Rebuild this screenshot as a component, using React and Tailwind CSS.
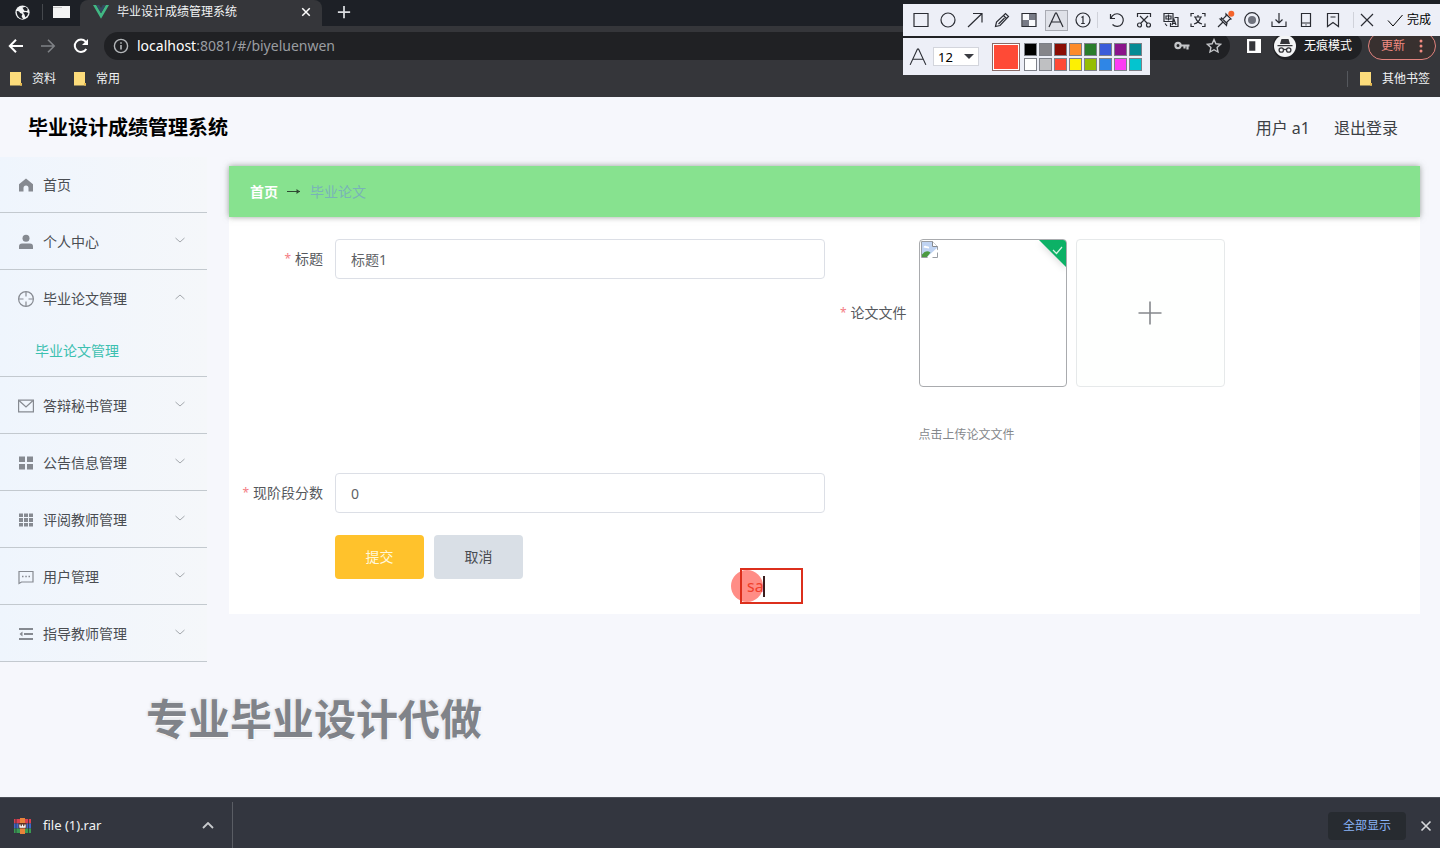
import { useState } from "react";

const FONT = "font-['Noto_Sans','Noto_Sans_CJK_SC',sans-serif]";

function Svg({ size = 16, className = "", children, ...rest }) {
  return (
    <svg
      width={size}
      height={size}
      viewBox="0 0 16 16"
      fill="none"
      stroke="currentColor"
      strokeWidth="1.2"
      aria-hidden="true"
      className={`shrink-0 ${className}`}
      {...rest}
    >
      {children}
    </svg>
  );
}

function Folder() {
  return (
    <svg width="12" height="14" viewBox="0 0 12 14" aria-hidden="true" className="shrink-0">
      <path d="M0 0h11v11h1v2.5H0z" fill="#fcdc7b" />
      <path d="M10 11h2v2.5h-2z" fill="#e8bb50" />
    </svg>
  );
}

function TabStrip() {
  return (
    <div className="flex h-[26px] items-start bg-[#1d2026]">
      <div className="flex h-6 w-20 items-center">
        <button type="button" aria-label="地球标签" className="flex w-[42px] justify-center pl-[2px] text-[#f1f3f4]">
          <Svg size={15} stroke="none">
            <circle cx="8" cy="8" r="7.6" fill="#f1f3f4" />
            <path d="M1.800 6.500Q4.500 6 5.500 8.500l2.500 1L7 12l1.500 2.800C4.500 15 1.800 11.500 1.800 6.500zM8 3l3-1.200L13.500 4 13 6.500 10 6z" fill="#1d2026" />
            <path d="M8.500 8l3-.5 2.800 1-1.300 3-2 1.500-.8-2.500z" fill="#1d2026" />
          </Svg>
        </button>
        <button type="button" aria-label="空白标签" className="flex h-4 w-[38px] items-center justify-center border-l border-[#45484d]">
          <svg width="17" height="12" viewBox="0 0 17 12" aria-hidden="true">
            <path d="M0 0h17v12H0z" fill="#f4f4f4" />
            <path d="M0 1.500h9" stroke="#c9c9c9" />
          </svg>
        </button>
      </div>
      <div className="flex h-[26px] w-[242px] items-start rounded-t-lg bg-[#35363a]">
        <div className="flex h-6 flex-1 items-center pl-[13px] pr-[11px]">
          <svg width="16" height="14" viewBox="0 0 16 14" aria-hidden="true">
            <path d="M0 0h3.200L8 8.300 12.800 0H16L8 13.800z" fill="#41b883" />
            <path d="M3.200 0h3L8 3.100 9.800 0h3L8 8.300z" fill="#34495e" />
          </svg>
          <span className="ml-2 text-xs text-[#f1f3f4]">毕业设计成绩管理系统</span>
          <button type="button" aria-label="关闭标签" className="ml-auto text-white">
            <Svg size={10}><path d="M2 2l12 12M14 2L2 14" strokeWidth="2.400" /></Svg>
          </button>
        </div>
      </div>
      <button type="button" aria-label="新标签页" className="flex h-6 w-11 items-center justify-center text-[#dadce0]">
        <Svg size={14}><path d="M8 1v14M1 8h14" strokeWidth="2" /></Svg>
      </button>
    </div>
  );
}

function AddressRow() {
  return (
    <div className="flex h-10 items-center pr-1 text-[#e8eaed]">
      <button type="button" aria-label="后退" className="flex w-8 justify-center text-white">
        <Svg><path d="M15 8H2M8 1.800L1.800 8 8 14.200" strokeWidth="2" /></Svg>
      </button>
      <button type="button" aria-label="前进" className="flex w-8 justify-center text-[#7f8286]">
        <Svg><path d="M1 8h13M8 1.800L14.200 8 8 14.200" strokeWidth="1.600" /></Svg>
      </button>
      <button type="button" aria-label="重新加载" className="flex w-[34px] justify-center text-white">
        <Svg>
          <path d="M13.300 11A6.200 6.200 0 1 1 12.600 3.600L14 5" strokeWidth="2" />
          <path d="M15 1v6H9z" fill="currentColor" stroke="none" />
        </Svg>
      </button>
      <div className="ml-1.5 flex h-7 flex-1 items-center rounded-full bg-[#202124] pl-[9px] pr-2">
        <Svg className="text-[#b4b7ba]">
          <circle cx="8" cy="8" r="6.600" strokeWidth="1.400" />
          <path d="M8 7v4.500M8 4.300v1.500" strokeWidth="1.600" />
        </Svg>
        <span className="ml-2 text-sm text-[#9a9da1]">
          <span className="text-white">localhost</span>:8081/#/biyeluenwen
        </span>
        <span className="ml-auto flex items-center gap-4">
          <Svg className="text-[#c4c6c9]">
            <circle cx="4" cy="7.500" r="2.600" strokeWidth="2.200" />
            <path d="M6.500 7.500H15.500M13.500 7.500v4M10.500 7.500v3" strokeWidth="2.200" />
          </Svg>
          <Svg className="text-[#c4c6c9]"><path d="M8 1.600l1.900 4.200 4.600.5-3.400 3.100.9 4.600L8 11.700 4 14l.9-4.600L1.500 6.300l4.600-.5z" strokeWidth="1.400" /></Svg>
        </span>
      </div>
      <button type="button" aria-label="侧边栏" className="ml-4 flex w-[15px] justify-center text-white">
        <Svg size={14}><path d="M0 0h16v16H0zM2.500 2.500v11h7v-11z" fill="currentColor" fillRule="evenodd" stroke="none" /></Svg>
      </button>
      <div className="ml-3 flex h-7 w-[89px] items-center rounded-full bg-[#202124] pl-px">
        <svg width="22" height="22" viewBox="0 0 22 22" aria-hidden="true" className="shrink-0">
          <circle cx="11" cy="11" r="11" fill="#f4f5f6" />
          <path d="M7.500 4h7l1.500 5H6zM3.500 10h15v1.300h-15z" fill="#35363a" />
          <g fill="none" stroke="#35363a" strokeWidth="1.300">
            <circle cx="7.300" cy="15" r="2.200" />
            <circle cx="14.700" cy="15" r="2.200" />
            <path d="M9.500 14.500h3" />
          </g>
        </svg>
        <span className="ml-2 whitespace-nowrap text-xs text-white">无痕模式</span>
      </div>
      <button type="button" className="ml-1.5 flex h-7 w-[68px] items-center rounded-full border border-[#e2837e] bg-[#38302f] pl-3 text-xs text-[#f28b82]">
        更新
        <svg width="4" height="14" viewBox="0 0 4 14" fill="#f28b82" aria-hidden="true" className="ml-3.5">
          <circle cx="2" cy="2" r="1.500" /><circle cx="2" cy="7" r="1.500" /><circle cx="2" cy="12" r="1.500" />
        </svg>
      </button>
    </div>
  );
}

function BookmarkBar() {
  return (
    <div className="flex h-[31px] items-start text-xs text-[#f1f3f4]">
      <div className="flex h-[26px] flex-1 items-center gap-[18px] px-2.5">
        <a href="#ziliao" className="flex items-center gap-2.5"><Folder />资料</a>
        <a href="#changyong" className="flex items-center gap-2.5"><Folder />常用</a>
        <a href="#qita" className="ml-auto flex items-center gap-2.5 border-l border-[#55585d] pl-3"><Folder />其他书签</a>
      </div>
    </div>
  );
}

const TOOLS_A = [
  ["矩形", <path d="M1 1.500h14v13H1z" />],
  ["椭圆", <circle cx="8" cy="8" r="7" />],
  ["箭头", <path d="M1 15L15 1.500M6 1.500h9v9" />],
  ["画笔", <path d="M1.500 14.500l1-4.500L11.500 1.500l3 3L6 13.500zM9.500 3.500l3 3M4.500 12l6-6" />],
  ["马赛克", <><path d="M2 2h12v12H2z" fill="#f8f9fc" stroke="none" /><path d="M8 2h6.500v6H8zM1.500 8H8v6H1.500z" fill="#777a86" stroke="none" /><path d="M1 1.500h14v13H1z" /></>],
  ["文字", <path d="M1 15L7.500 1h1L15 15M3.500 10h9" />],
  ["序号", <><circle cx="8" cy="8" r="7" /><path d="M6.500 5.500L8 4.500v7M6.200 11.500h3.600" /></>],
];

const TOOLS_B = [
  ["撤销", <path d="M1.500 2v4.500H6M2 6.200A6.300 6.300 0 1 1 3.500 12.500" />],
  ["裁剪", <><path d="M1.500 5V1.500h13V5M4 4l7.500 7.500M12 4l-7.500 7.500" /><circle cx="3.500" cy="13" r="2" /><circle cx="12.500" cy="13" r="2" /></>],
  ["翻译", <><path d="M1 1.500h9v8H1zM3 4h5v3H3zM5.500 2.500v6M11.500 5.500H15v9H7.500V11M9 13l2-5.500 2 5.500M10 11.500h2.500M2 11.500l2 2.500" /></>],
  ["识别", <><path d="M1 4.500V1.500h3M12 1.500h3v3M15 11.500v3h-3M4 14.500H1v-3M4 5h8M8 3v2M5.500 5.500C6.500 9 8.500 11 12 12M10.500 5.500C9.500 9 7.500 11 4 12" /></>],
  ["固定", <><path d="M9 2l5 5-1.500.5L10 10l-.5 3.500L3 7l3.500-.5L9 4zM6 10l-5 5M4 5.500l6.500 6.500" /><circle cx="14.300" cy="1.700" r="3" fill="#f4642c" stroke="none" /></>],
  ["录制", <><circle cx="8" cy="8" r="7.300" /><circle cx="8" cy="8" r="4" fill="#6f727d" stroke="none" /></>],
  ["下载", <path d="M8 1v10M4.500 7.500L8 11l3.500-3.500M1 9.500v5h14v-5" />],
  ["手机", <path d="M3.500 1.500h9v13h-9zM3.500 11h9M7.500 12.800h1" />],
  ["收藏", <path d="M2.500 1.500h11v13L8 10.500l-5.500 4zM5.500 5h5" />],
];

function ToolButton({ label, active, children }) {
  return (
    <button
      type="button"
      aria-label={label}
      className={
        active
          ? "mx-[2px] flex h-[21px] w-[23px] items-center justify-center border border-[#a9abb3] bg-[#dfe1e8]"
          : "flex h-6 w-[27px] items-center justify-center"
      }
    >
      <Svg className="overflow-visible">{children}</Svg>
    </button>
  );
}

const SWATCHES = [
  ["#000000", "bg-[#000000]"], ["#808080", "bg-[#85858a]"], ["#800000", "bg-[#8a0c04]"], ["#ff8c28", "bg-[#fd8b2b]"],
  ["#2a7d2a", "bg-[#2a7d2c]"], ["#3a5bd9", "bg-[#3a5bd9]"], ["#8b148b", "bg-[#8a148b]"], ["#008b96", "bg-[#068a95]"],
  ["#ffffff", "bg-[#ffffff]"], ["#c0c0c0", "bg-[#bfc0c2]"], ["#ff4a36", "bg-[#ff4a36]"], ["#fff000", "bg-[#fdf003]"],
  ["#96be00", "bg-[#95bd04]"], ["#2f86e6", "bg-[#2f86e6]"], ["#ff3cf5", "bg-[#fd3cf3]"], ["#00c3cd", "bg-[#04c4cf]"],
];

function AnnotationTools() {
  return (
    <div className="absolute right-0 top-1 z-10 flex flex-col items-start gap-[2px] text-[#2a2c33]">
      <div className="flex h-8 items-center bg-[#edeff7] pl-[5px] pr-[9px]">
        {TOOLS_A.map(([label, icon]) => (
          <ToolButton key={label} label={label} active={label === "文字"}>{icon}</ToolButton>
        ))}
        <span className="mr-1.5 h-4 w-px bg-[#d0d2da]" />
        {TOOLS_B.map(([label, icon]) => (
          <ToolButton key={label} label={label}>{icon}</ToolButton>
        ))}
        <span className="ml-1.5 h-4 w-px bg-[#d0d2da]" />
        <ToolButton label="取消截图"><path d="M2 2l12 12M14 2L2 14" /></ToolButton>
        <button type="button" className="ml-1.5 flex items-center gap-1 whitespace-nowrap text-xs text-black">
          <Svg strokeWidth="1"><path d="M1 8.500l5 5.500L15.500 3" /></Svg>
          完成
        </button>
      </div>
      <div className="flex h-[37px] items-center bg-[#edeff7] pl-1.5 pr-2">
        <Svg size={18} strokeWidth="1"><path d="M1 15L7.500 1h1L15 15M3.500 10h9" /></Svg>
        <label className="relative ml-1.5 flex items-center">
          <select aria-label="字号" defaultValue="12" className="h-[19px] w-[46px] appearance-none border border-[#d3d5dc] bg-white pl-1 text-[13px] leading-4 text-black">
            <option>12</option>
            <option>14</option>
            <option>16</option>
          </select>
          <svg width="10" height="5" viewBox="0 0 10 5" aria-hidden="true" className="pointer-events-none absolute right-[5px]">
            <path d="M0 0h10L5 5z" fill="#3a3c42" />
          </svg>
        </label>
        <button type="button" aria-label="当前颜色" className="ml-[13px] h-7 w-7 border border-[#8a6a66] bg-[#ff4a36] outline-1 -outline-offset-2 outline-white" />
        <div className="ml-1 grid grid-cols-8 gap-[2px]">
          {SWATCHES.map(([name, bg]) => (
            <button key={name} type="button" aria-label={name} className={`h-[13px] w-[13px] border border-[#7d8088] ${bg}`} />
          ))}
        </div>
      </div>
    </div>
  );
}

const MENU = [
  { label: "首页", icon: <path d="M8 1.500l7 5.700V14.500h-4.500V11a2.500 2.500 0 0 0-5 0v3.500H1V7.200z" fill="currentColor" stroke="none" /> },
  { label: "个人中心", arrow: true, icon: <><circle cx="8" cy="4.300" r="3.500" fill="currentColor" stroke="none" /><path d="M1 15v-2.500Q1 9.500 4 9.500h8q3 0 3 3V15z" fill="currentColor" stroke="none" /></> },
  { label: "毕业论文管理", arrow: true, open: true, icon: <><circle cx="8" cy="8" r="7.400" /><path d="M8 1v4.500M8 10.500V15M1 8h4.500M10.500 8H15" /></> },
  { label: "答辩秘书管理", arrow: true, icon: <path d="M.6 2.200h14.800v11.600H.6zM1.500 3L8 9l6.500-6" /> },
  { label: "公告信息管理", arrow: true, icon: <path d="M1 1.500h6v5.500H1zM9 1.500h6v5.500H9zM1 9h6v5.500H1zM9 9h6v5.500H9z" fill="currentColor" stroke="none" /> },
  { label: "评阅教师管理", arrow: true, icon: <path d="M1 1.500h4v3.500H1zM6 1.500h4v3.500H6zM11 1.500h4v3.500h-4zM1 6h4v4H1zM6 6h4v4H6zM11 6h4v4h-4zM1 11h4v3.500H1zM6 11h4v3.500H6zM11 11h4v3.500h-4z" fill="currentColor" stroke="none" /> },
  { label: "用户管理", arrow: true, icon: <><path d="M1 2.500h14v10.500H3.500L1 14.500z" /><path d="M4 7.500h1.500M7.300 7.500h1.500M10.500 7.500H12" strokeWidth="1.600" /></> },
  { label: "指导教师管理", arrow: true, icon: <><path d="M1 3h14M6 8h9M1 13h14" strokeWidth="1.800" /><path d="M4.500 5.500v5L1.500 8z" fill="currentColor" stroke="none" /></> },
];

function Sidebar() {
  return (
    <nav aria-label="主菜单" className="w-[207px] shrink-0 bg-linear-to-r from-[#eff5fd] to-[#f5f7fa] text-sm text-[#4a4d52]">
      <ul>
        {MENU.map((item) => (
          <li key={item.label} className="border-b border-[#c3c9cf]">
            <button type="button" aria-expanded={item.arrow ? !!item.open : undefined} className={`flex w-full items-center pl-[18px] pr-[22px] ${item.arrow ? "h-14 pt-[2px]" : "h-[55px]"}`}>
              <Svg className="text-[#868a91]">{item.icon}</Svg>
              <span className="ml-[9px]">{item.label}</span>
              {item.arrow && (
                <svg width="10" height="6" viewBox="0 0 10 6" fill="none" stroke="#a3a7ac" aria-hidden="true" className="mb-1 ml-auto">
                  <path d={item.open ? "M.5 5L5 1l4.500 4" : "M.5 1L5 5l4.500-4"} />
                </svg>
              )}
            </button>
            {item.open && (
              <a href="#biyeluenwen" className="flex h-[50px] items-center pl-[35px] text-[#3cc0b0]">毕业论文管理</a>
            )}
          </li>
        ))}
      </ul>
    </nav>
  );
}

function Required() {
  return <span className="mr-1 text-xs text-[#f47c84]">*</span>;
}

const LABEL = "flex h-10 shrink-0 items-center justify-end pr-3 text-sm text-[#55585d]";
const FIELD = "h-10 min-w-0 flex-1 rounded border border-[#dcdfe6] bg-white px-[15px] text-sm text-[#606266] outline-none";

function ThesisForm() {
  const [title, setTitle] = useState("标题1");
  const [score, setScore] = useState("0");
  return (
    <form onSubmit={(e) => e.preventDefault()} className="bg-white pb-[35px] pt-[22px]">
      <div className="grid grid-cols-2">
        <div className="flex items-start">
          <label htmlFor="title" className={`${LABEL} w-[106px]`}><Required />标题</label>
          <input id="title" value={title} onChange={(e) => setTitle(e.target.value)} className={FIELD} />
        </div>
        <div className="flex h-[234px] items-start">
          <div className="flex h-[148px] items-center">
            <span className={`${LABEL} w-[94px]`}><Required />论文文件</span>
          </div>
          <div>
            <div className="flex gap-[9px]">
              <div className="relative h-[148px] w-[148px] overflow-hidden rounded-sm border border-[#a9abae] p-px">
                <svg width="17" height="17" viewBox="0 0 17 17" role="img" aria-label="论文文件" className="block">
                  <path d="M.5.5h11l5 5v11H.5z" fill="#fff" stroke="#9a9ea3" />
                  <path d="M1 1h10v5h5v1L6 16H1z" fill="#bfd3f2" />
                  <path d="M2.500 6.500a2 2 0 0 1 3.500-1 1.500 1.500 0 0 1 2 2z" fill="#fff" />
                  <path d="M1 16v-2.500Q5 8 9.500 11.500L6 16z" fill="#4c9a41" />
                  <path d="M6 17L17 8.500v2.500l-6 6z" fill="#fff" />
                  <path d="M11.500.5v5h5" fill="#fff" stroke="#85898e" />
                </svg>
                <svg width="27" height="27" viewBox="0 0 27 27" aria-hidden="true" className="absolute right-0 top-0 drop-shadow-md">
                  <path d="M0 0h27v27z" fill="#0cb166" />
                  <path d="M14 10l3.500 3.500L23 7" fill="none" stroke="#d4f5e4" strokeWidth="1.200" />
                </svg>
              </div>
              <button type="button" aria-label="上传论文文件" className="flex h-[148px] w-[149px] items-center justify-center rounded-sm border border-[#e6e9ea] bg-[#fefffe] text-[#85888c]">
                <svg width="24" height="24" viewBox="0 0 24 24" stroke="currentColor" strokeWidth="1.600" aria-hidden="true">
                  <path d="M12 0.500v23M.5 12h23" />
                </svg>
              </button>
            </div>
            <p className="mt-[38px] text-xs leading-5 text-[#85888c]">点击上传论文文件</p>
          </div>
        </div>
        <div className="flex items-start">
          <label htmlFor="score" className={`${LABEL} w-[106px]`}><Required />现阶段分数</label>
          <input id="score" value={score} onChange={(e) => setScore(e.target.value)} className={FIELD} />
        </div>
      </div>
      <div className="mt-[22px] flex gap-2.5 pl-[106px] text-sm">
        <button type="submit" className="h-11 w-[89px] rounded bg-[#ffc22c] text-[#fff8dc]">提交</button>
        <button type="button" className="h-11 w-[89px] rounded bg-[#d9dfe6] text-[#4a4d52]">取消</button>
      </div>
    </form>
  );
}

function TextAnnotation() {
  return (
    <div className="absolute left-[731px] top-[471px] flex h-9 items-center">
      <span className="absolute left-0 h-8 w-8 rounded-full bg-[#ff8d86]" />
      <input aria-label="文字批注" defaultValue="sa" className="relative ml-[9px] h-9 w-[63px] border-2 border-[#dc2f1c] bg-transparent pl-[5px] text-base text-[#f0402c] outline-none" />
      <span className="absolute left-8 h-[21px] w-[2px] bg-[#3a1c1c]" />
    </div>
  );
}

function Downloads() {
  return (
    <footer className="flex h-[51px] items-stretch border-t border-[#4b4f57] bg-[#33363f] text-[#f1f3f4]">
      <div className="mt-1 flex w-[233px] items-center border-r border-[#5a5d64] pb-px pl-[14px] pr-[18px] pt-[2px]">
        <svg width="17" height="16" viewBox="0 0 17 16" aria-hidden="true">
          <path d="M0 1h17v4.500H0z" fill="#d8404f" />
          <path d="M0 5.500h17v5H0z" fill="#3f66c9" />
          <path d="M0 10.500h17V15H0z" fill="#3a9a52" />
          <path d="M6 0h5v16H6z" fill="#e8833a" />
          <path d="M4.500 5h8v5.500h-8z" fill="#5d3426" />
          <path d="M6 6.500v2.500h5V6.500M8.500 6.500v2" fill="none" stroke="#fff" strokeWidth="1.300" />
          <path d="M2 1v14M14.500 1v14" stroke="#262a33" strokeWidth=".7" />
        </svg>
        <span className="ml-3 text-[13px]">file (1).rar</span>
        <button type="button" aria-label="更多操作" className="ml-auto">
          <svg width="12" height="7" viewBox="0 0 12 7" fill="none" stroke="#c8cacd" strokeWidth="1.800" aria-hidden="true"><path d="M1 6l5-5 5 5" /></svg>
        </button>
      </div>
      <div className="ml-auto flex items-center pr-2 pt-[5px]">
        <button type="button" className="h-7 rounded bg-[#272b30] px-[15px] text-xs text-[#8ab4f8]">全部显示</button>
        <button type="button" aria-label="关闭下载栏" className="ml-3.5 text-[#d5d7da]">
          <Svg size={12}><path d="M2 2l12 12M14 2L2 14" strokeWidth="2.200" /></Svg>
        </button>
      </div>
    </footer>
  );
}

export default function App() {
  return (
    <div className={`relative flex min-h-screen flex-col overflow-hidden bg-[#f6f7fc] ${FONT}`}>
      <div className="bg-[#35363a]">
        <TabStrip />
        <AddressRow />
        <BookmarkBar />
      </div>
      <AnnotationTools />
      <div className="relative flex flex-1 flex-col">
        <header className="flex h-[60px] items-center justify-between pl-7 pr-[42px] pt-[2px]">
          <h1 className="text-xl font-bold text-black">毕业设计成绩管理系统</h1>
          <div className="flex gap-6 text-base text-[#3c3f44]">
            <span>用户 a1</span>
            <button type="button">退出登录</button>
          </div>
        </header>
        <div className="flex flex-1 items-start">
          <Sidebar />
          <main className="min-w-0 flex-1 pl-[22px] pr-5 pt-[9px]">
            <nav aria-label="面包屑" className="relative flex h-[51px] items-center bg-[#87e28f] pl-[21px] text-sm shadow-[0_0_6px_rgba(90,100,90,0.6)]">
              <a href="#home" className="font-bold text-white">首页</a>
              <svg width="14" height="8" viewBox="0 0 14 8" fill="none" stroke="#2f4a33" aria-hidden="true" className="mx-[9px]">
                <path d="M0 3.500h13" />
                <path d="M9.500 1v5L13 3.500z" fill="#2f4a33" stroke="none" />
              </svg>
              <span className="text-[#79b3b8]">毕业论文</span>
            </nav>
            <ThesisForm />
          </main>
        </div>
        <TextAnnotation />
        <div className="pointer-events-none absolute left-[146px] top-[590px] text-[42px] font-bold leading-[64px] text-[#808389] [text-shadow:0_0_2px_#fff,1px_1px_1px_#fff,0_0_3px_#b5b8be]">
          专业毕业设计代做
        </div>
      </div>
      <Downloads />
    </div>
  );
}
